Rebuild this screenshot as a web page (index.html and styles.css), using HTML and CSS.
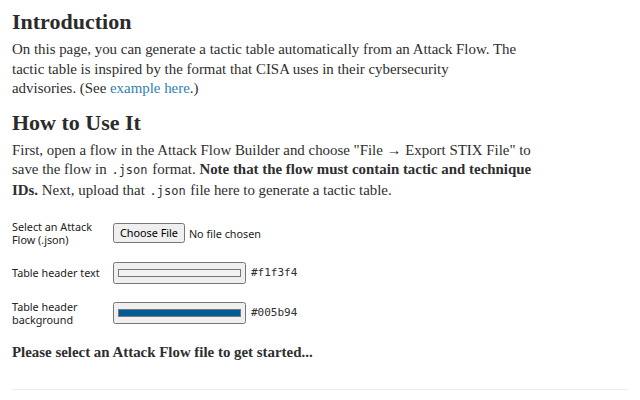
FILE: index.html
```html
<!DOCTYPE html>
<html lang="en">

<head>
  <meta charset="UTF-8">
  <meta name="viewport" content="width=device-width, initial-scale=1.0">
  <title>Tactic Table</title>
  <link rel="stylesheet" href="styles.css">
</head>

<body>
  <main class="page">
    <h2>Introduction</h2>
    <p>
      On this page, you can generate a tactic table automatically from an Attack Flow. The<br>
      tactic table is inspired by the format that CISA uses in their cybersecurity<br>
      advisories. (See <a href="#">example here</a>.)
    </p>

    <h2>How to Use It</h2>
    <p>
      First, open a flow in the Attack Flow Builder and choose "File &rarr; Export STIX File" to<br>
      save the flow in <code>.json</code> format. <strong>Note that the flow must contain tactic and technique<br>
      IDs.</strong> Next, upload that <code>.json</code> file here to generate a tactic table.
    </p>

    <div class="form">
      <div class="field">
        <label for="file">Select an Attack Flow (.json)</label>
        <input type="file" id="file">
      </div>
      <div class="field">
        <label for="fg">Table header text</label>
        <input type="color" id="fg" value="#f1f3f4">
        <span class="hex">#f1f3f4</span>
      </div>
      <div class="field">
        <label for="bg">Table header background</label>
        <input type="color" id="bg" value="#005b94">
        <span class="hex">#005b94</span>
      </div>
    </div>

    <p class="status">Please select an Attack Flow file to get started...</p>

    <hr class="line">
  </main>
</body>

</html>
```

FILE: styles.css
```css
* {
  padding: 0;
  margin: 0;
  box-sizing: border-box;
}

body {
  font-family: "Liberation Serif", serif;
  color: #2e2e2e;
  background-color: #fff;
}

.page {
  padding: 8px 12px;
}

h2 {
  font-size: 22px;
  line-height: 28px;
  font-weight: bold;
  color: #2b2b2b;
  margin-bottom: 4px;
}

p {
  font-size: 14.9px;
  line-height: 19.6px;
  max-width: 580px;
  margin-bottom: 10px;
}

a {
  color: #2f7fb5;
  text-decoration: none;
}

code {
  font-family: "DejaVu Sans Mono", monospace;
  font-size: 12px;
  padding: 0 1px;
}

.form {
  display: flex;
  flex-direction: column;
  gap: 16px;
  margin: 18px 0 17px;
}

.field {
  display: flex;
  align-items: center;
}

label {
  width: 101px;
  font-family: "Noto Sans", sans-serif;
  font-size: 10.8px;
  line-height: 13px;
  color: #222;
}

input[type=file] {
  font-family: "Noto Sans", sans-serif;
  font-size: 10.8px;
  color: #222;
}

input[type=file]::file-selector-button {
  height: 20px;
  padding: 0 5px;
  font-family: "Noto Sans", sans-serif;
  font-size: 10.8px;
}

input[type=color] {
  width: 133px;
  height: 22px;
  padding: 2px;
}

.hex {
  margin-left: 5px;
  font-family: "DejaVu Sans Mono", monospace;
  font-size: 11px;
}

.status {
  font-weight: bold;
  margin-bottom: 27px;
}

.line {
  border: none;
  border-top: 1px solid #eee;
}
```
